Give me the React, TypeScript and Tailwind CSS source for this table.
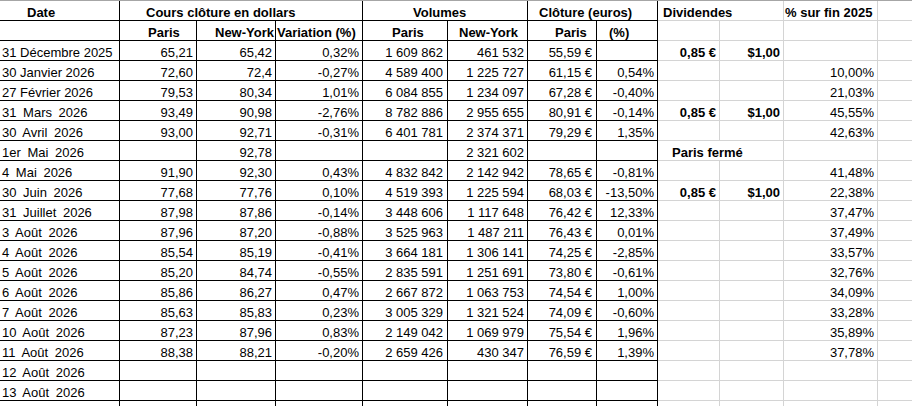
// Cours / volumes spreadsheet — Excel-like grid

const NS = '\u00a0'

type Row = {
  date: string
  wide?: boolean
  paris?: string
  ny?: string
  variation?: string
  volParis?: string
  volNy?: string
  eurParis?: string
  eurPct?: string
  div?: boolean
  closed?: boolean
  sinceEnd?: string
}

const v = (s: string) => s.replace(/ /g, NS)

const ROWS: Row[] = [
  { date: '31 Décembre 2025', paris: '65,21', ny: '65,42', variation: '0,32%', volParis: v('1 609 862'), volNy: v('461 532'), eurParis: '55,59 €', div: true },
  { date: '30 Janvier 2026', paris: '72,60', ny: '72,4', variation: '-0,27%', volParis: v('4 589 400'), volNy: v('1 225 727'), eurParis: '61,15 €', eurPct: '0,54%', sinceEnd: '10,00%' },
  { date: '27 Février 2026', paris: '79,53', ny: '80,34', variation: '1,01%', volParis: v('6 084 855'), volNy: v('1 234 097'), eurParis: '67,28 €', eurPct: '-0,40%', sinceEnd: '21,03%' },
  { date: '31 Mars 2026', wide: true, paris: '93,49', ny: '90,98', variation: '-2,76%', volParis: v('8 782 886'), volNy: v('2 955 655'), eurParis: '80,91 €', eurPct: '-0,14%', div: true, sinceEnd: '45,55%' },
  { date: '30 Avril 2026', wide: true, paris: '93,00', ny: '92,71', variation: '-0,31%', volParis: v('6 401 781'), volNy: v('2 374 371'), eurParis: '79,29 €', eurPct: '1,35%', sinceEnd: '42,63%' },
  { date: '1er Mai 2026', wide: true, ny: '92,78', volNy: v('2 321 602'), closed: true },
  { date: '4 Mai 2026', wide: true, paris: '91,90', ny: '92,30', variation: '0,43%', volParis: v('4 832 842'), volNy: v('2 142 942'), eurParis: '78,65 €', eurPct: '-0,81%', sinceEnd: '41,48%' },
  { date: '30 Juin 2026', wide: true, paris: '77,68', ny: '77,76', variation: '0,10%', volParis: v('4 519 393'), volNy: v('1 225 594'), eurParis: '68,03 €', eurPct: '-13,50%', div: true, sinceEnd: '22,38%' },
  { date: '31 Juillet 2026', wide: true, paris: '87,98', ny: '87,86', variation: '-0,14%', volParis: v('3 448 606'), volNy: v('1 117 648'), eurParis: '76,42 €', eurPct: '12,33%', sinceEnd: '37,47%' },
  { date: '3 Août 2026', wide: true, paris: '87,96', ny: '87,20', variation: '-0,88%', volParis: v('3 525 963'), volNy: v('1 487 211'), eurParis: '76,43 €', eurPct: '0,01%', sinceEnd: '37,49%' },
  { date: '4 Août 2026', wide: true, paris: '85,54', ny: '85,19', variation: '-0,41%', volParis: v('3 664 181'), volNy: v('1 306 141'), eurParis: '74,25 €', eurPct: '-2,85%', sinceEnd: '33,57%' },
  { date: '5 Août 2026', wide: true, paris: '85,20', ny: '84,74', variation: '-0,55%', volParis: v('2 835 591'), volNy: v('1 251 691'), eurParis: '73,80 €', eurPct: '-0,61%', sinceEnd: '32,76%' },
  { date: '6 Août 2026', wide: true, paris: '85,86', ny: '86,27', variation: '0,47%', volParis: v('2 667 872'), volNy: v('1 063 753'), eurParis: '74,54 €', eurPct: '1,00%', sinceEnd: '34,09%' },
  { date: '7 Août 2026', wide: true, paris: '85,63', ny: '85,83', variation: '0,23%', volParis: v('3 005 329'), volNy: v('1 321 524'), eurParis: '74,09 €', eurPct: '-0,60%', sinceEnd: '33,28%' },
  { date: '10 Août 2026', wide: true, paris: '87,23', ny: '87,96', variation: '0,83%', volParis: v('2 149 042'), volNy: v('1 069 979'), eurParis: '75,54 €', eurPct: '1,96%', sinceEnd: '35,89%' },
  { date: '11 Août 2026', wide: true, paris: '88,38', ny: '88,21', variation: '-0,20%', volParis: v('2 659 426'), volNy: v('430 347'), eurParis: '76,59 €', eurPct: '1,39%', sinceEnd: '37,78%' },
  { date: '12 Août 2026', wide: true },
  { date: '13 Août 2026', wide: true },
  { date: '' },
]

interface CellProps {
  children?: React.ReactNode
  light?: boolean
  right?: boolean
  className?: string
}

function Cell({ children, light, right, className = '' }: CellProps) {
  return (
    <div
      className={`h-[20px] flex items-end whitespace-nowrap leading-[15px] border-r border-b ${
        light ? 'border-[#d4d4d4]' : 'border-black'
      } ${right ? 'justify-end pr-[3px]' : ''} ${className}`}
    >
      {children}
    </div>
  )
}

export default function App() {
  return (
    <div
      className="w-[912px] h-[406px] overflow-hidden bg-white text-black text-[13px] border-t border-[#a6a6a6]"
      style={{ fontFamily: '"Liberation Sans", Arial, sans-serif' }}
    >
      <div className="grid grid-cols-[120px_77px_79px_87px_85px_80px_69px_61px_62px_64px_94px_1fr]">
        {/* Header row 1 */}
        <Cell className="font-bold pl-[27px]">Date</Cell>
        <Cell className="col-span-3 font-bold pl-[26px]">Cours clôture en dollars</Cell>
        <Cell className="col-span-2 font-bold pl-[50px]">Volumes</Cell>
        <Cell className="col-span-2 font-bold pl-[11px]">Clôture (euros)</Cell>
        <Cell light className="col-span-2 font-bold pl-[5px]">Dividendes</Cell>
        <Cell light className="font-bold pl-[1px]">% sur fin 2025</Cell>
        <Cell light className="border-r-0" />

        {/* Header row 2 */}
        <Cell />
        <Cell className="font-bold pl-[28px]">Paris</Cell>
        <Cell className="font-bold pl-[18px] overflow-visible">New-York</Cell>
        <Cell className="font-bold pl-[1px]">Variation (%)</Cell>
        <Cell className="font-bold pl-[29px]">Paris</Cell>
        <Cell className="font-bold pl-[11px]">New-York</Cell>
        <Cell className="font-bold pl-[27px]">Paris</Cell>
        <Cell className="font-bold pl-[12px]">(%)</Cell>
        <Cell light />
        <Cell light />
        <Cell light />
        <Cell light className="border-r-0" />

        {/* Data rows */}
        {ROWS.map((r, i) => (
          <div key={i} className="contents">
            <Cell className={`pl-[2px] ${r.wide ? '[word-spacing:3px]' : ''}`}>{r.date}</Cell>
            <Cell right>{r.paris}</Cell>
            <Cell right>{r.ny}</Cell>
            <Cell right>{r.variation}</Cell>
            <Cell right className="pr-[4px]">{r.volParis}</Cell>
            <Cell right>{r.volNy}</Cell>
            <Cell right className="pr-[4px]">{r.eurParis}</Cell>
            <Cell right>{r.eurPct}</Cell>
            {r.closed ? (
              <Cell light className="col-span-2 font-bold pl-[14px]">Paris fermé</Cell>
            ) : (
              <>
                <Cell light right className="font-bold">{r.div ? '0,85 €' : ''}</Cell>
                <Cell light right className="font-bold">{r.div ? '$1,00' : ''}</Cell>
              </>
            )}
            <Cell light right>{r.sinceEnd}</Cell>
            <Cell light className="border-r-0" />
          </div>
        ))}
      </div>
    </div>
  )
}
